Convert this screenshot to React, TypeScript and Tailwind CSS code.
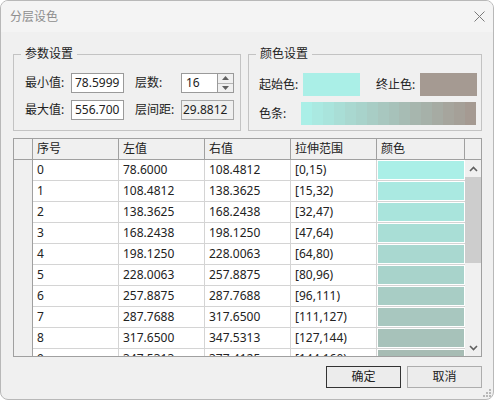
import React from "react";

const START = [170, 239, 231];
const END = [165, 154, 146];

const colorAt = (i: number) => {
  const t = i / 15;
  const c = START.map((s, k) => Math.round(s + (END[k] - s) * t));
  return `rgb(${c[0]}, ${c[1]}, ${c[2]})`;
};

const rows = [
  ["0", "78.6000", "108.4812", "[0,15)"],
  ["1", "108.4812", "138.3625", "[15,32)"],
  ["2", "138.3625", "168.2438", "[32,47)"],
  ["3", "168.2438", "198.1250", "[47,64)"],
  ["4", "198.1250", "228.0063", "[64,80)"],
  ["5", "228.0063", "257.8875", "[80,96)"],
  ["6", "257.8875", "287.7688", "[96,111)"],
  ["7", "287.7688", "317.6500", "[111,127)"],
  ["8", "317.6500", "347.5313", "[127,144)"],
  ["9", "347.5313", "377.4125", "[144,160)"],
];

const headers = ["序号", "左值", "右值", "拉伸范围"];

function GroupBox({ title, className, children }: { title: string; className: string; children: React.ReactNode }) {
  return (
    <div className={`relative border border-[#c3c3c3] h-[77px] pt-[18px] ${className}`}>
      <span className="absolute left-[7px] -top-[9px] h-[16px] px-[4px] bg-[#f0f0f0] leading-[16px]">{title}</span>
      {children}
    </div>
  );
}

function Arrow({ up }: { up?: boolean }) {
  return (
    <svg width="7" height="4" viewBox="0 0 7 4">
      <path d={up ? "M0 4 L3.5 0 L7 4 Z" : "M0 0 L3.5 4 L7 0 Z"} fill="#606060" />
    </svg>
  );
}

function Chevron({ up }: { up?: boolean }) {
  return (
    <svg width="9" height="6" viewBox="0 0 9 6">
      <path d={up ? "M1 5 L4.5 1.5 L8 5" : "M1 1 L4.5 4.5 L8 1"} fill="none" stroke="#606060" strokeWidth="1.6" />
    </svg>
  );
}

export default function App() {
  return (
    <div className="w-[495px] h-[401px] bg-white font-['Noto_Sans','Noto_Sans_CJK_SC',sans-serif] text-[12px] text-[#222]">
      <div className="relative w-[494px] h-[400px] border border-[#b8b8b8] rounded-[8px] bg-[#f0f0f0] overflow-hidden flex flex-col">
        {/* title bar */}
        <div className="h-[31px] bg-[#f4f4f4] flex items-center justify-between pl-[9px] pr-[8px]">
          <span className="text-[#8e8e8e] leading-[16px]">分层设色</span>
          <svg width="11" height="11" viewBox="0 0 11 11">
            <path d="M0.5 0.5 L10.5 10.5 M10.5 0.5 L0.5 10.5" stroke="#7a7a7a" strokeWidth="1" />
          </svg>
        </div>

        <div className="flex flex-col pl-[12px] pr-[11px] pt-[22px]">
          <div className="flex gap-[7px]">
            <GroupBox title="参数设置" className="w-[228px] pl-[11px]">
              <div className="flex items-center h-[20px]">
                <span className="w-[46px]">最小值:</span>
                <div className="w-[53px] h-[20px] border border-[#9a9a9a] bg-white pl-[3px] leading-[18px]">78.5999</div>
                <span className="ml-[11px] w-[46px]">层数:</span>
                <div className="flex w-[53px] h-[20px] border border-[#9a9a9a]">
                  <div className="w-[36px] bg-white pl-[4px] leading-[18px] border-r border-[#9a9a9a]">16</div>
                  <div className="flex-1 flex flex-col bg-[#f0f0f0]">
                    <div className="flex-1 flex items-center justify-center border-b border-[#b4b4b4]">
                      <Arrow up />
                    </div>
                    <div className="flex-1 flex items-center justify-center">
                      <Arrow />
                    </div>
                  </div>
                </div>
              </div>
              <div className="flex items-center h-[20px] mt-[7px]">
                <span className="w-[46px]">最大值:</span>
                <div className="w-[53px] h-[20px] border border-[#9a9a9a] bg-white pl-[3px] leading-[18px] overflow-hidden whitespace-nowrap">556.700</div>
                <span className="ml-[11px] w-[46px]">层间距:</span>
                <div className="w-[53px] h-[20px] border border-[#a8a8a8] bg-[#f0f0f0] pl-[1px] leading-[18px] overflow-hidden whitespace-nowrap">29.8812</div>
              </div>
            </GroupBox>

            <GroupBox title="颜色设置" className="w-[234px] pl-[10px]">
              <div className="flex items-center h-[23px]">
                <span className="w-[44px]">起始色:</span>
                <div className="w-[57px] h-[23px]" style={{ backgroundColor: colorAt(0) }} />
                <span className="ml-[16px] w-[44px]">终止色:</span>
                <div className="w-[57px] h-[23px]" style={{ backgroundColor: colorAt(15) }} />
              </div>
              <div className="flex items-center h-[23px] mt-[6px]">
                <span className="w-[42px]">色条:</span>
                <div className="w-[175px] h-[23px] flex">
                  {Array.from({ length: 16 }, (_, i) => (
                    <div key={i} className="flex-1 h-full" style={{ backgroundColor: colorAt(i) }} />
                  ))}
                </div>
              </div>
            </GroupBox>
          </div>

          {/* table */}
          <div className="mt-[7px] w-[469px] h-[219px] border border-[#a0a0a0] flex flex-col overflow-hidden">
            <div className="flex h-[21px] border-b border-[#a0a0a0] bg-[#f0f0f0] shrink-0">
              <div className="w-[19px] border-r border-[#a0a0a0]" />
              {headers.map((h) => (
                <div key={h} className="w-[86px] border-r border-[#a0a0a0] pl-[4px] leading-[20px]">{h}</div>
              ))}
              <div className="w-[88px] border-r border-[#a0a0a0] pl-[4px] leading-[20px]">颜色</div>
              <div className="flex-1" />
            </div>
            <div className="flex h-[196px]">
              <div className="w-[19px] border-r border-[#a0a0a0] bg-[#f0f0f0]" />
              <div className="w-[432px] bg-white overflow-hidden">
                {rows.map((r, i) => (
                  <div key={r[0]} className="flex h-[21px] border-b border-[#d4d4d4]">
                    {r.map((c, k) => (
                      <div key={k} className="w-[86px] border-r border-[#d4d4d4] pl-[4px] leading-[20px] whitespace-nowrap overflow-hidden">{c}</div>
                    ))}
                    <div className="w-[88px] p-[1px]">
                      <div className="w-full h-full" style={{ backgroundColor: colorAt(i) }} />
                    </div>
                  </div>
                ))}
              </div>
              <div className="flex-1 flex flex-col bg-[#f0f0f0]">
                <div className="h-[17px] flex items-center justify-center">
                  <Chevron up />
                </div>
                <div className="h-[86px] bg-[#cdcdcd]" />
                <div className="flex-1" />
                <div className="h-[16px] flex items-center justify-center">
                  <Chevron />
                </div>
              </div>
            </div>
          </div>

          {/* buttons */}
          <div className="flex justify-end gap-[6px] mt-[9px]">
            <button className="w-[75px] h-[22px] border border-[#333] bg-[#ececec] leading-[20px]">确定</button>
            <button className="w-[75px] h-[22px] border border-[#adadad] bg-[#ececec] leading-[20px]">取消</button>
          </div>
        </div>

        <svg className="absolute right-[1px] bottom-[1px]" width="9" height="9" viewBox="0 0 9 9">
          <g fill="#b8b8b8">
            <rect x="6" y="0" width="2" height="2" />
            <rect x="3" y="3" width="2" height="2" />
            <rect x="6" y="3" width="2" height="2" />
            <rect x="0" y="6" width="2" height="2" />
            <rect x="3" y="6" width="2" height="2" />
            <rect x="6" y="6" width="2" height="2" />
          </g>
        </svg>
      </div>
    </div>
  );
}
